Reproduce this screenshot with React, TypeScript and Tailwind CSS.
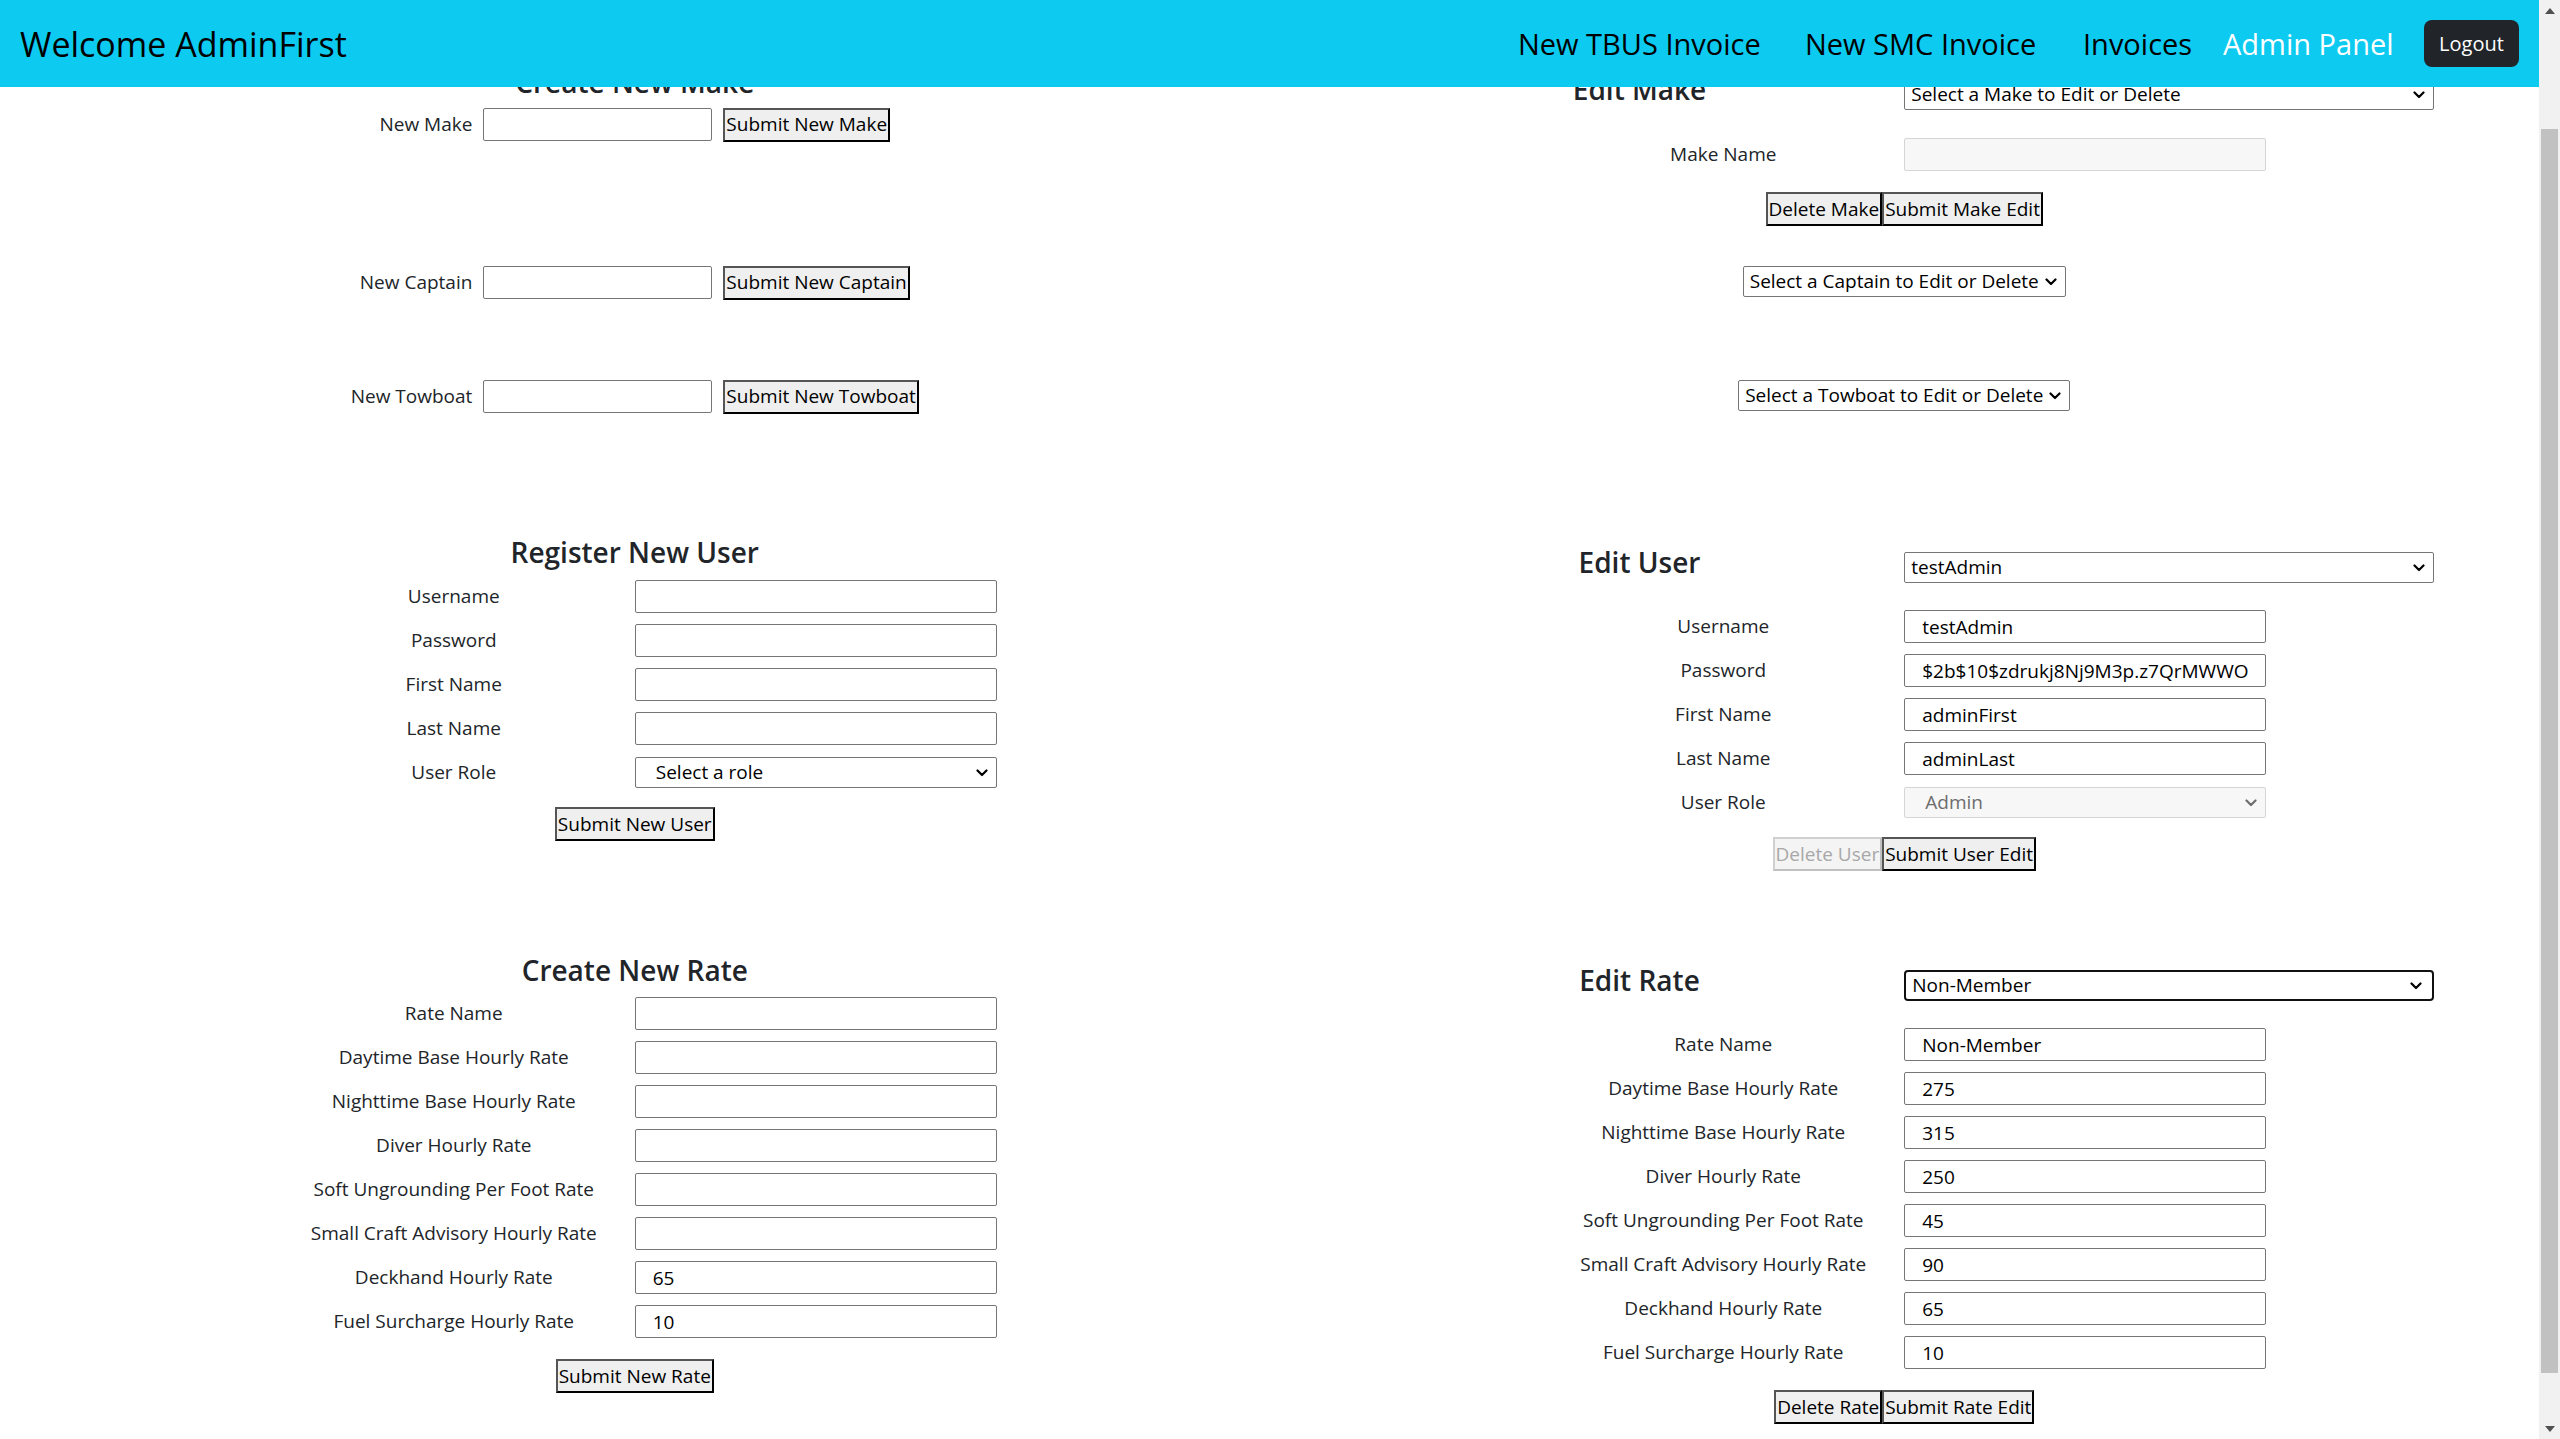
import React from "react";

function Chevron({ color = "#000" }: { color?: string }) {
  return (
    <svg width="12" height="8" viewBox="0 0 12 8" className="shrink-0">
      <path d="M1.5 1.5 L6 6 L10.5 1.5" fill="none" stroke={color} strokeWidth="2.2" strokeLinecap="round" strokeLinejoin="round" />
    </svg>
  );
}

function Btn({ children, disabled = false, className = "" }: { children: React.ReactNode; disabled?: boolean; className?: string }) {
  return (
    <button
      type="button"
      className={`${
        disabled
          ? "border-t-[#d0d0d0] border-l-[#d0d0d0] border-b-[#c0c0c0] border-r-[#c0c0c0] bg-[#f4f4f4] text-[#a8a8a8]"
          : "border-t-[#555555] border-l-[#555555] border-b-black border-r-black bg-[#efefef] text-black"
      } h-[34px] border-2 px-[1px] leading-none whitespace-nowrap ${className}`}
    >
      {children}
    </button>
  );
}

function Inp({ value = "", disabled = false, className = "" }: { value?: string; disabled?: boolean; className?: string }) {
  return (
    <input
      readOnly
      disabled={disabled}
      value={value}
      className={`h-[33px] w-full rounded-[2px] border pl-[17px] pr-[4px] text-[19px] text-black outline-none ${
        disabled ? "border-[#d5d5d5] bg-[#f7f7f7]" : "border-[#767676] bg-white"
      } ${className}`}
    />
  );
}

function Sel({ text, className = "", variant = "normal" }: { text: string; className?: string; variant?: "normal" | "focused" | "disabled" | "form" }) {
  const v =
    variant === "focused"
      ? "border-2 border-[#111111] rounded-[4px] bg-white text-black pl-[6px] pr-[10px]"
      : variant === "disabled"
      ? "border border-[#d5d5d5] rounded-[2px] bg-[#f7f7f7] text-[#6d6d6d] pl-[20px] pr-[8px]"
      : variant === "form"
      ? "border border-[#767676] rounded-[2px] bg-white text-black pl-[20px] pr-[8px]"
      : "border border-[#767676] rounded-[2px] bg-white text-black pl-[6px] pr-[8px]";
  return (
    <div className={`flex h-[31px] items-center justify-between gap-[6px] ${v} ${className}`}>
      <span className="whitespace-nowrap leading-none">{text}</span>
      <Chevron color={variant === "disabled" ? "#6d6d6d" : "#000"} />
    </div>
  );
}

function InlineRow({ label, btn, className = "" }: { label: string; btn: string; className?: string }) {
  return (
    <div className={`flex h-[33px] items-center gap-[11px] ${className}`}>
      <span className="whitespace-nowrap">{label}</span>
      <input readOnly className="h-[33px] w-[229px] rounded-[2px] border border-[#767676] bg-white outline-none" />
      <Btn className="h-[33px]">{btn}</Btn>
    </div>
  );
}

function FormRow({ label, children }: { label: string; children: React.ReactNode }) {
  return (
    <div className="grid h-[33px] w-[724px] grid-cols-2 items-center">
      <span className="text-center whitespace-nowrap">{label}</span>
      <div className="flex items-center">{children}</div>
    </div>
  );
}

function HeadRow({ title, select, variant = "normal", className = "" }: { title: string; select: string; variant?: "normal" | "focused"; className?: string }) {
  return (
    <div className={`grid w-[1059px] grid-cols-2 items-start ${className}`}>
      <h3 className="text-center text-[28px] leading-[36px] font-semibold">{title}</h3>
      <Sel text={select} variant={variant} className="mt-[8px] w-full" />
    </div>
  );
}

const rateLabels = [
  "Rate Name",
  "Daytime Base Hourly Rate",
  "Nighttime Base Hourly Rate",
  "Diver Hourly Rate",
  "Soft Ungrounding Per Foot Rate",
  "Small Craft Advisory Hourly Rate",
  "Deckhand Hourly Rate",
  "Fuel Surcharge Hourly Rate",
];
const newRateValues = ["", "", "", "", "", "", "65", "10"];
const editRateValues = ["Non-Member", "275", "315", "250", "45", "90", "65", "10"];

function LeftCol() {
  return (
    <div className="flex flex-col items-center pt-[64px]">
      <h3 className="text-[28px] leading-[36px] font-semibold">Create New Make</h3>
      <InlineRow className="mt-[8px]" label="New Make" btn="Submit New Make" />
      <InlineRow className="mt-[125px]" label="New Captain" btn="Submit New Captain" />
      <InlineRow className="mt-[81px]" label="New Towboat" btn="Submit New Towboat" />

      <h3 className="mt-[121px] text-[28px] leading-[36px] font-semibold">Register New User</h3>
      <div className="mt-[10px] flex flex-col gap-[11px]">
        <FormRow label="Username"><Inp /></FormRow>
        <FormRow label="Password"><Inp /></FormRow>
        <FormRow label="First Name"><Inp /></FormRow>
        <FormRow label="Last Name"><Inp /></FormRow>
        <FormRow label="User Role"><Sel text="Select a role" variant="form" className="w-full" /></FormRow>
      </div>
      <Btn className="mt-[18px]">Submit New User</Btn>

      <h3 className="mt-[111px] text-[28px] leading-[36px] font-semibold">Create New Rate</h3>
      <div className="mt-[9px] flex flex-col gap-[11px]">
        {rateLabels.map((l, i) => (
          <FormRow key={l} label={l}>
            <Inp value={newRateValues[i]} />
          </FormRow>
        ))}
      </div>
      <Btn className="mt-[21px] h-[33px]">Submit New Rate</Btn>
    </div>
  );
}

function RightCol() {
  return (
    <div className="flex flex-col items-center pt-[71px]">
      <HeadRow title="Edit Make" select="Select a Make to Edit or Delete" />
      <div className="mt-[28px]">
        <FormRow label="Make Name"><Inp disabled /></FormRow>
      </div>
      <div className="mt-[21px] flex">
        <Btn>Delete Make</Btn>
        <Btn>Submit Make Edit</Btn>
      </div>
      <Sel text="Select a Captain to Edit or Delete" className="mt-[40px]" />
      <Sel text="Select a Towboat to Edit or Delete" className="mt-[83px]" />

      <HeadRow className="mt-[133px]" title="Edit User" select="testAdmin" />
      <div className="mt-[27px] flex flex-col gap-[11px]">
        <FormRow label="Username"><Inp value="testAdmin" /></FormRow>
        <FormRow label="Password"><Inp value="$2b$10$zdrukj8Nj9M3p.z7QrMWWO" /></FormRow>
        <FormRow label="First Name"><Inp value="adminFirst" /></FormRow>
        <FormRow label="Last Name"><Inp value="adminLast" /></FormRow>
        <FormRow label="User Role"><Sel text="Admin" variant="disabled" className="w-full" /></FormRow>
      </div>
      <div className="mt-[18px] flex">
        <Btn disabled className="h-[33px]">Delete User</Btn>
        <Btn className="h-[33px]">Submit User Edit</Btn>
      </div>

      <HeadRow className="mt-[91px]" title="Edit Rate" select="Non-Member" variant="focused" />
      <div className="mt-[27px] flex flex-col gap-[11px]">
        {rateLabels.map((l, i) => (
          <FormRow key={l} label={l}>
            <Inp value={editRateValues[i]} />
          </FormRow>
        ))}
      </div>
      <div className="mt-[21px] flex">
        <Btn className="h-[33px]">Delete Rate</Btn>
        <Btn className="h-[33px]">Submit Rate Edit</Btn>
      </div>
    </div>
  );
}

function Navbar() {
  return (
    <div className="absolute inset-x-0 top-0 z-10 flex h-[87px] items-center bg-[#0dcaf0] px-[20px]">
      <span className="text-[34px] leading-none text-black whitespace-nowrap">Welcome AdminFirst</span>
      <div className="ml-auto flex items-center text-[29px] leading-none">
        <span className="w-[287px] text-black whitespace-nowrap">New TBUS Invoice</span>
        <span className="w-[278px] text-black whitespace-nowrap">New SMC Invoice</span>
        <span className="w-[140px] text-black whitespace-nowrap">Invoices</span>
        <span className="w-[201px] text-white whitespace-nowrap">Admin Panel</span>
        <button type="button" className="flex h-[47px] w-[95px] items-center justify-center rounded-[8px] bg-[#212529] text-[20px] leading-none text-white">
          Logout
        </button>
      </div>
    </div>
  );
}

function Scrollbar() {
  return (
    <div className="flex h-full w-[21px] flex-col bg-[#f1f1f1]">
      <div className="flex h-[21px] items-center justify-center">
        <svg width="10" height="6" viewBox="0 0 10 6">
          <path d="M0 6 L5 0 L10 6 Z" fill="#505050" />
        </svg>
      </div>
      <div className="h-[108px]" />
      <div className="mx-[2px] h-[1244px] bg-[#c1c1c1]" />
      <div className="flex-1" />
      <div className="flex h-[21px] items-center justify-center">
        <svg width="10" height="6" viewBox="0 0 10 6">
          <path d="M0 0 L10 0 L5 6 Z" fill="#505050" />
        </svg>
      </div>
    </div>
  );
}

export default function App() {
  return (
    <div className="flex h-[1439px] w-[2560px] overflow-hidden bg-white font-['Open_Sans','Noto_Sans',sans-serif] text-[19px] text-[#212529]">
      <div className="relative h-full flex-1">
        <Navbar />
        <div className="grid grid-cols-2">
          <LeftCol />
          <RightCol />
        </div>
      </div>
      <Scrollbar />
    </div>
  );
}
